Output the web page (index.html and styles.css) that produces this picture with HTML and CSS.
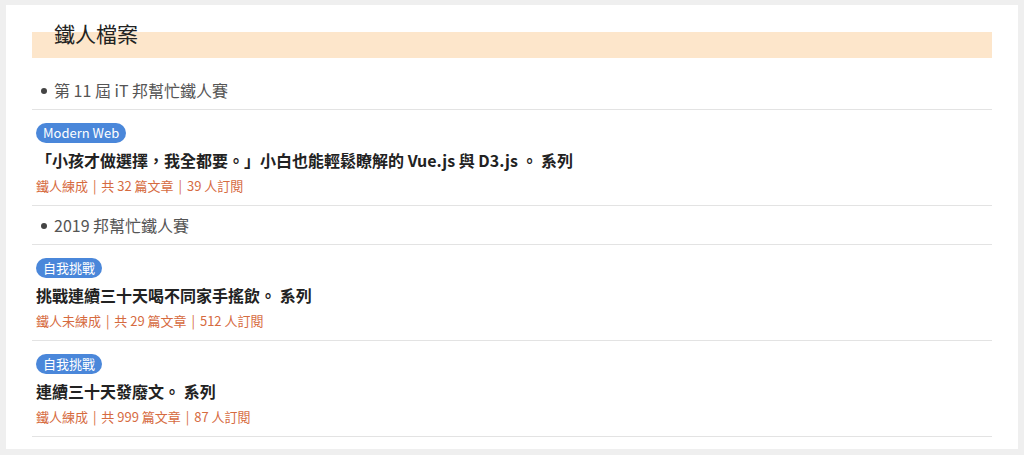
FILE: index.html
```html
<!DOCTYPE html>
<html lang="zh-Hant">
<head>
    <meta charset="UTF-8">
    <meta name="viewport" content="width=device-width, initial-scale=1.0">
    <title>鐵人檔案</title>
    <link rel="stylesheet" href="styles.css">
</head>
<body>
    <div class="profile">
        <h2 class="profile-title">鐵人檔案</h2>

        <div class="contest">第 11 屆 iT 邦幫忙鐵人賽</div>
        <div class="series">
            <span class="tag">Modern Web</span>
            <div class="series-title">「小孩才做選擇，我全都要。」小白也能輕鬆瞭解的 Vue.js 與 D3.js 。 系列</div>
            <div class="series-meta">鐵人練成 <span class="sep">|</span> 共 32 篇文章 <span class="sep">|</span> 39 人訂閱</div>
        </div>

        <div class="contest">2019 邦幫忙鐵人賽</div>
        <div class="series">
            <span class="tag">自我挑戰</span>
            <div class="series-title">挑戰連續三十天喝不同家手搖飲。 系列</div>
            <div class="series-meta">鐵人未練成 <span class="sep">|</span> 共 29 篇文章 <span class="sep">|</span> 512 人訂閱</div>
        </div>
        <div class="series">
            <span class="tag">自我挑戰</span>
            <div class="series-title">連續三十天發廢文。 系列</div>
            <div class="series-meta">鐵人練成 <span class="sep">|</span> 共 999 篇文章 <span class="sep">|</span> 87 人訂閱</div>
        </div>
    </div>
</body>
</html>
```

FILE: styles.css
```css
body {
    margin: 0;
    padding: 5px 6px 6px;
    background-color: #efefef;
    font-family: "Noto Sans CJK TC", "Noto Sans", sans-serif;
}
.profile {
    background-color: #fff;
    padding: 13px 26px 12px;
}
.profile-title {
    margin: 0 0 13px;
    padding: 0 22px 10px;
    font-size: 21px;
    font-weight: normal;
    line-height: 30px;
    color: #222;
    background: linear-gradient(transparent 14px, #fde6cb 14px);
}
.contest {
    position: relative;
    padding: 7px 0 7px 22px;
    font-size: 16px;
    line-height: 24px;
    color: #555;
    border-bottom: 1px solid #e3e3e3;
}
.contest::before {
    content: "";
    position: absolute;
    left: 9px;
    top: 17px;
    width: 6px;
    height: 6px;
    border-radius: 50%;
    background-color: #444;
}
.series {
    display: flex;
    flex-direction: column;
    align-items: flex-start;
    padding: 13px 4px 9px;
    border-bottom: 1px solid #e3e3e3;
}
.tag {
    padding: 0 7px;
    height: 20px;
    line-height: 20px;
    font-size: 13px;
    color: #fff;
    background-color: #4a87da;
    border-radius: 10px;
}
.series-title {
    margin-top: 5px;
    font-size: 16px;
    font-weight: bold;
    line-height: 24px;
    color: #222;
}
.series-meta {
    margin-top: 4px;
    font-size: 13px;
    line-height: 20px;
    color: #d66b3f;
}
.sep {
    margin: 0 2px;
}
```
